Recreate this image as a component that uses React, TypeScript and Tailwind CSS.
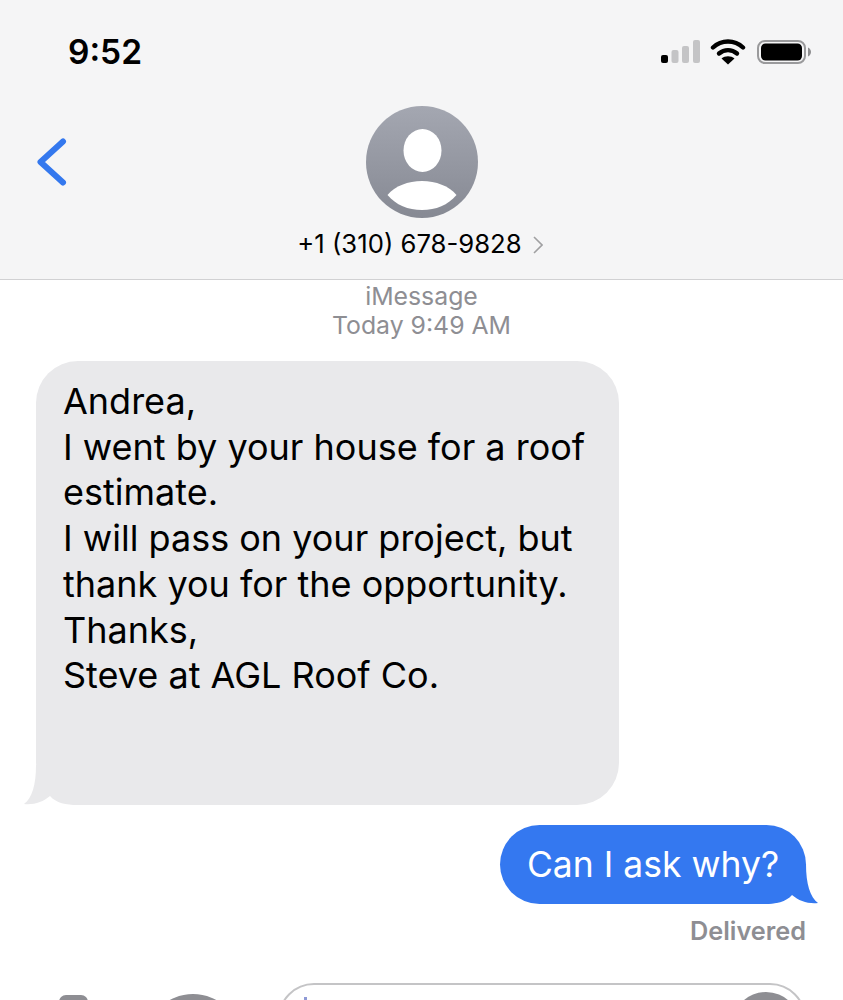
function StatusIcons() {
  return (
    <div className="flex items-center">
      <svg width="40" height="26" viewBox="0 0 40 26" className="mr-[9px]">
        <rect x="0" y="16" width="7" height="8" rx="2" fill="#000" />
        <rect x="10.5" y="11" width="7" height="13" rx="2" fill="#c4c4c6" />
        <rect x="21" y="7" width="7" height="17" rx="2" fill="#c4c4c6" />
        <rect x="32" y="1" width="7" height="23" rx="2" fill="#c4c4c6" />
      </svg>
      <svg width="36" height="26" viewBox="0 0 36 26" className="mr-[11px]">
        <path d="M3 8.5C11.5 0.5 24.5 0.5 33 8.5" fill="none" stroke="#000" strokeWidth="4.4" strokeLinecap="round" />
        <path d="M9 14.5C14.2 10 21.8 10 27 14.5" fill="none" stroke="#000" strokeWidth="4.4" strokeLinecap="round" />
        <path d="M18 25.5L11.5 19.5C15 16.6 21 16.6 24.5 19.5Z" fill="#000" />
      </svg>
      <svg width="54" height="26" viewBox="0 0 54 26">
        <rect x="1" y="2" width="47" height="22" rx="7" fill="none" stroke="#9a9a9c" strokeWidth="2" />
        <rect x="4" y="4.5" width="41" height="17" rx="4.5" fill="#000" />
        <path d="M51 8.5C53 9.5 54 11.2 54 13C54 14.8 53 16.5 51 17.5Z" fill="#8e8e90" />
      </svg>
    </div>
  )
}

function Avatar() {
  return (
    <svg width="112" height="112" viewBox="0 0 112 112">
      <defs>
        <linearGradient id="avatarGrey" x1="0" y1="0" x2="0" y2="1">
          <stop offset="0" stopColor="#a4a7b1" />
          <stop offset="1" stopColor="#868993" />
        </linearGradient>
      </defs>
      <circle cx="56" cy="56" r="56" fill="url(#avatarGrey)" />
      <ellipse cx="56.5" cy="44.5" rx="19" ry="21.5" fill="#fff" />
      <path d="M21.5 89C29 80 42 75 56 75C70 75 83 80 90.5 89C82 99 70 104 56 104C42 104 30 99 21.5 89Z" fill="#fff" />
    </svg>
  )
}

// tail plus the bubble's rounded corner, so the two read as one shape
function BubbleTail({ side, color }: { side: "left" | "right"; color: string }) {
  if (side === "left") {
    return (
      <svg width="54" height="40" viewBox="0 0 54 40" className="absolute bottom-0 left-[-12px]">
        <path d="M12 0C12 20 8 33 0 39C10 40 19 37 26 31C32 38 42 40 54 40L54 0Z" fill={color} />
      </svg>
    )
  }
  return (
    <svg width="54" height="40" viewBox="0 0 54 40" className="absolute bottom-0 right-[-12px]">
      <path d="M42 0C42 20 46 33 54 39C44 40 35 37 28 31C22 38 12 40 0 40L0 0Z" fill={color} />
    </svg>
  )
}

export default function App() {
  return (
    <div className="w-[843px] h-[1000px] overflow-hidden bg-white font-['Inter',sans-serif]">
      <header className="h-[280px] bg-[#f5f5f6] border-b border-[#d1d1d3]">
        <div className="flex items-center justify-between pl-[68px] pr-[32px] pt-[31px]">
          <span className="text-[33.5px] leading-[42px] font-semibold text-black">9:52</span>
          <StatusIcons />
        </div>
        <div className="grid grid-cols-[1fr_auto_1fr] items-center mt-[33px]">
          <svg width="30" height="48" viewBox="0 0 30 48" className="ml-[37px]">
            <path d="M26 3.5L3.5 24L26 44.5" fill="none" stroke="#3478ee" strokeWidth="6" strokeLinecap="round" strokeLinejoin="round" />
          </svg>
          <Avatar />
        </div>
        <div className="flex items-center justify-center mt-[10px] mr-[3px] text-[25.7px] leading-[32px] text-black">
          <span>+1 (310) 678-9828</span>
          <svg width="10" height="18" viewBox="0 0 10 18" className="ml-[11px] mt-[2px]">
            <path d="M1 1L9 9L1 17" fill="none" stroke="#a0a0a2" strokeWidth="1.6" />
          </svg>
        </div>
      </header>

      <main className="flex flex-col">
        <div className="flex flex-col items-center mt-[2px] text-[24.8px] leading-[29px] text-[#8e8e93]">
          <span>iMessage</span>
          <span>Today 9:49 AM</span>
        </div>

        <div className="relative ml-[36px] mt-[21px] w-[583px] h-[444px] bg-[#e9e9eb] rounded-[42px] pl-[27px] pt-[18px] text-[36px] leading-[45.7px] text-black">
          <p>Andrea,</p>
          <p>I went by your house for a roof</p>
          <p>estimate.</p>
          <p>I will pass on your project, but</p>
          <p>thank you for the opportunity.</p>
          <p>Thanks,</p>
          <p>Steve at AGL Roof Co.</p>
          <BubbleTail side="left" color="#e9e9eb" />
        </div>

        <div className="relative self-end mr-[37px] mt-[20px] h-[79px] w-[306px] bg-[#3478f0] rounded-[40px] flex items-center justify-center text-[35.5px] text-white">
          <span className="relative z-10">Can I ask why?</span>
          <BubbleTail side="right" color="#3478f0" />
        </div>

        <div className="self-end mr-[37px] mt-[12px] text-[25.3px] leading-[30px] font-semibold text-[#8e8e93]">Delivered</div>
      </main>

      <footer className="flex items-start mt-[37px] h-[80px]">
        <div className="ml-[59px] mt-[12px] w-[29px] h-[20px] rounded-t-[7px] bg-[#8e8e93]" />
        <div className="ml-[57px] mt-[11px] w-[96px] h-[96px] rounded-full bg-[#8e8e93] shrink-0" />
        <div className="ml-[37px] w-[528px] h-[80px] rounded-t-[36px] border-2 border-[#c4c4c6] flex justify-between pl-[24px] pr-[4px] shrink-0">
          <div className="mt-[12px] w-[3px] h-[20px] bg-[#8f9ad6]" />
          <div className="mt-[7px] w-[68px] h-[68px] rounded-full bg-[#8e8e93]" />
        </div>
      </footer>
    </div>
  )
}
